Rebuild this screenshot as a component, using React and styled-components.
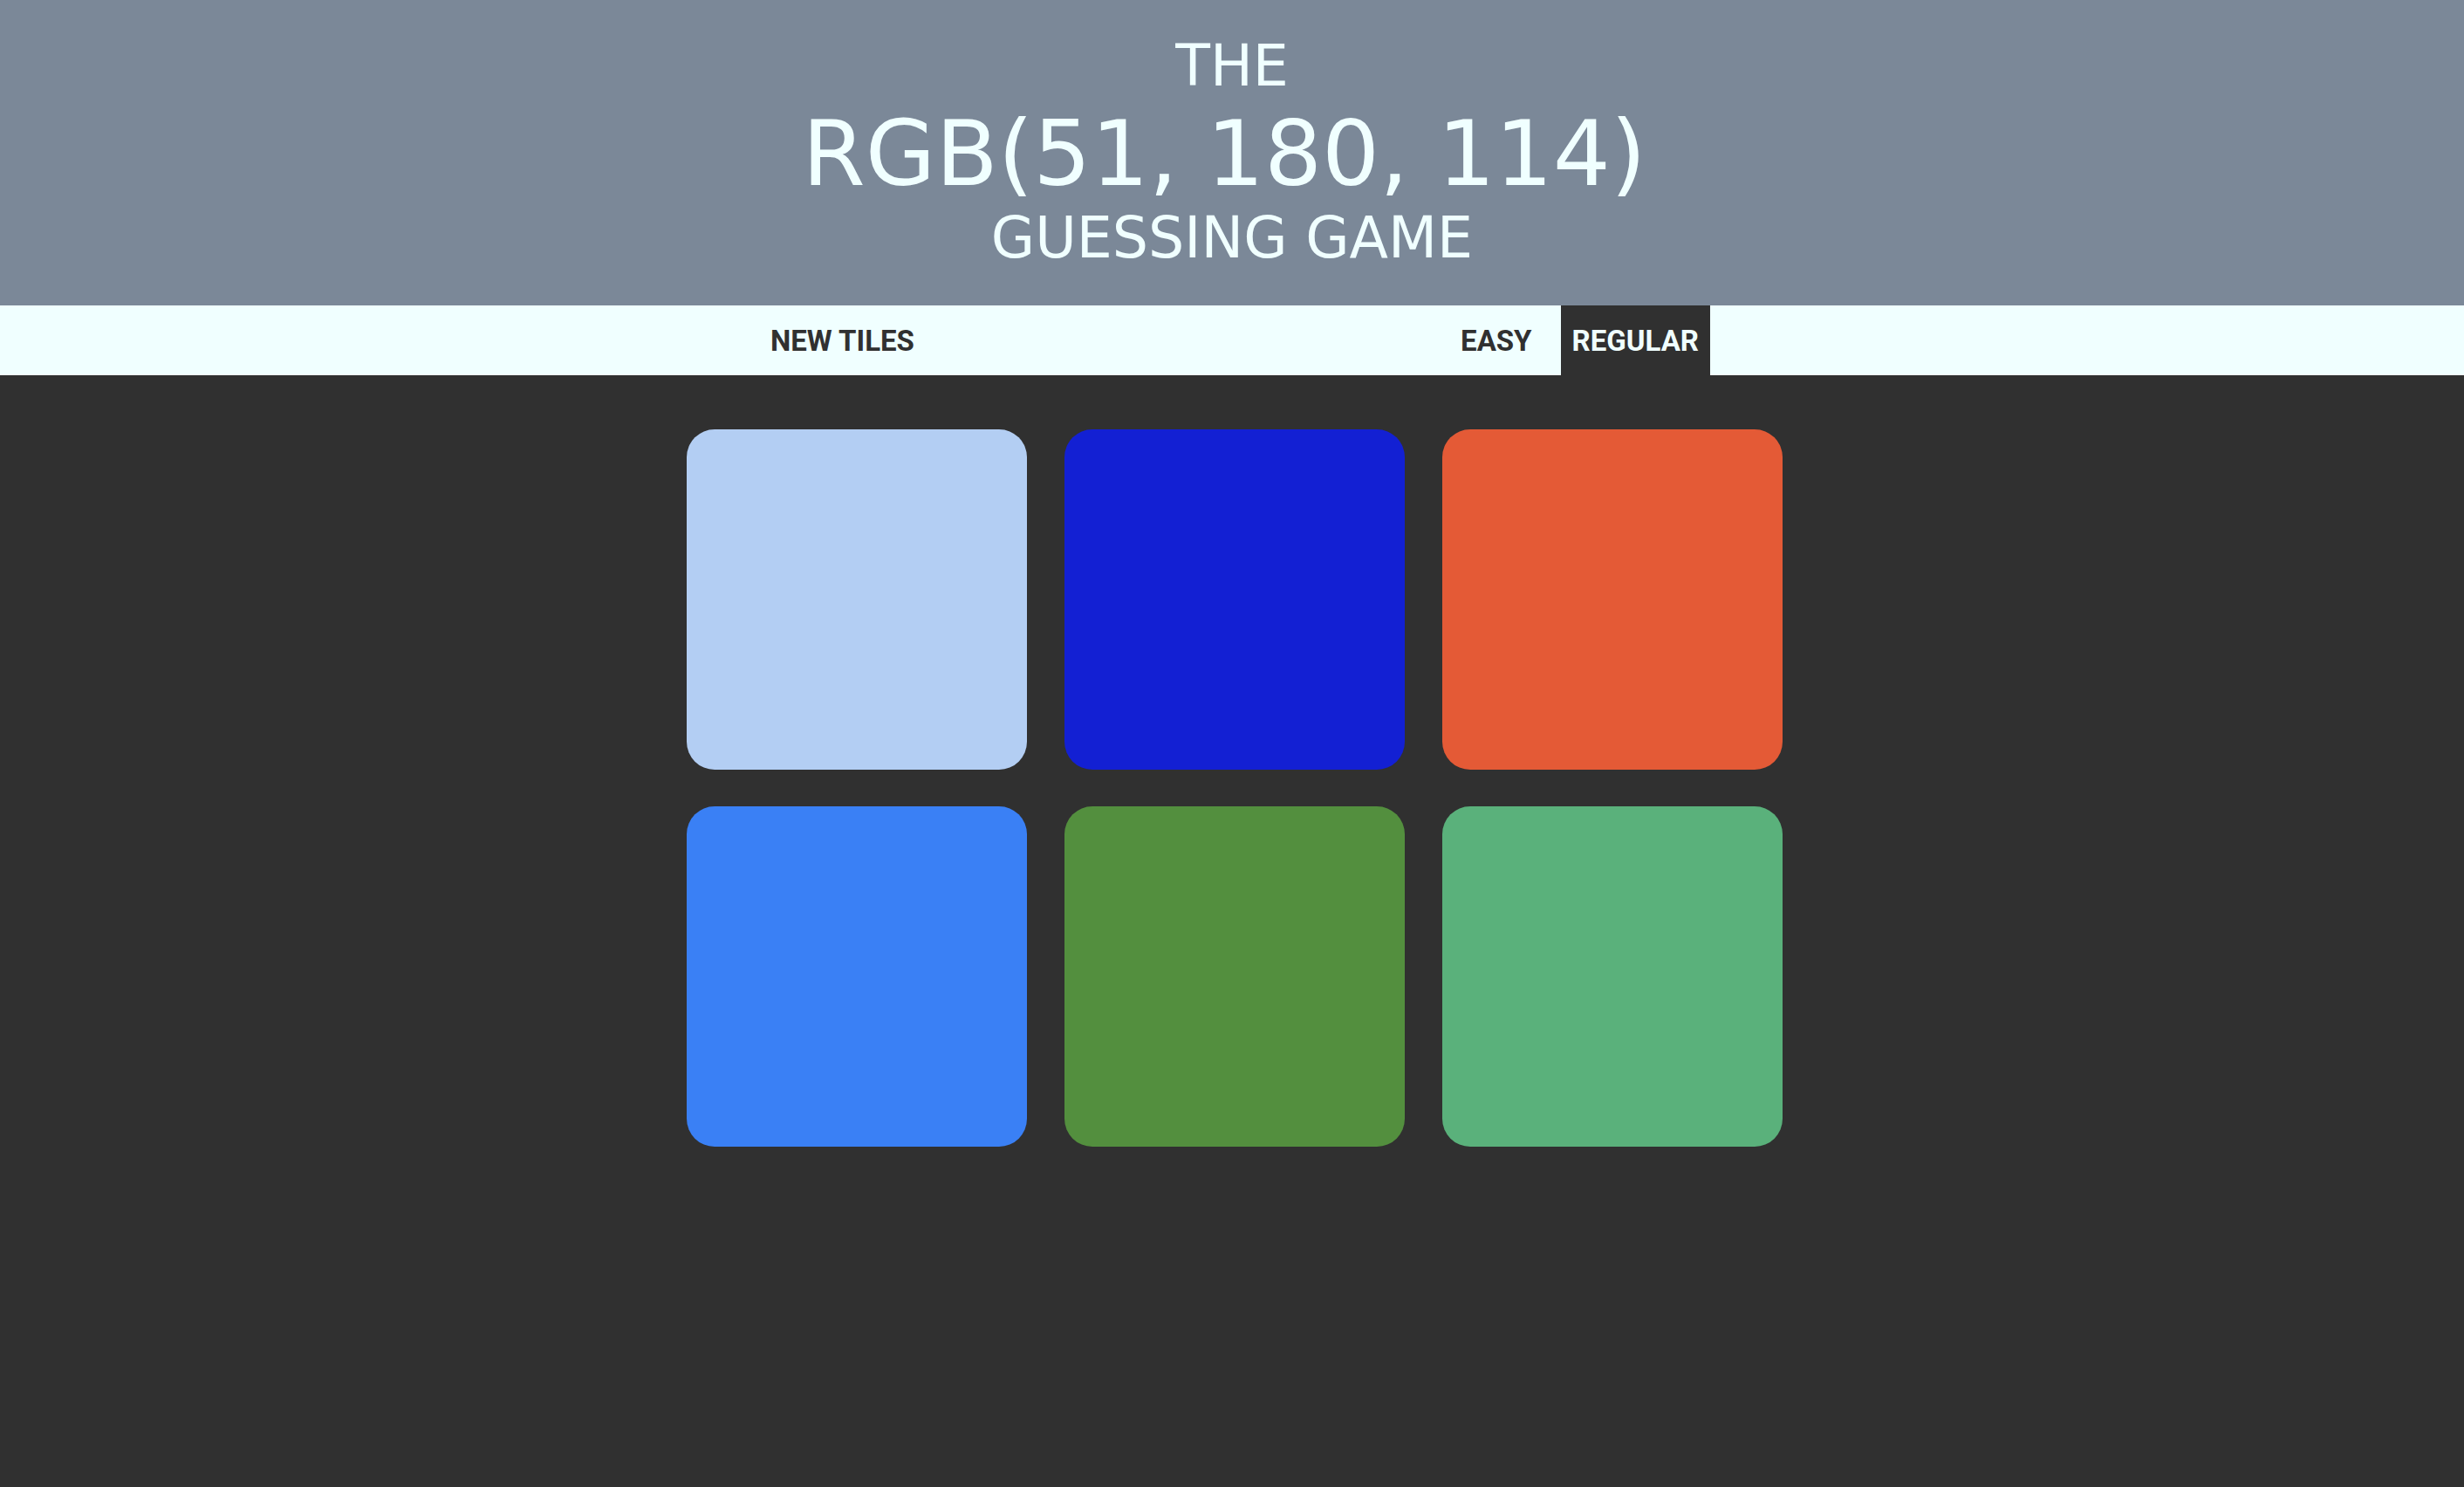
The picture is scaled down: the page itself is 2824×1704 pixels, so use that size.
import React from "react";
import styled, { createGlobalStyle } from "styled-components";

const tiles = ["#b3cef3", "#1320d3", "#e45a36", "#3a80f5", "#538f3e", "#5ab17b"];

const GlobalStyle = createGlobalStyle`
  html, body {
    margin: 0;
    padding: 0;
    background: #303030;
    min-height: 100%;
  }
  body {
    font-family: "DejaVu Sans", Verdana, sans-serif;
  }
`;

const App = () => {
  return (
    <>
      <GlobalStyle />
      <Header>
        <SmallLine>THE</SmallLine>
        <BigLine>RGB(51, 180, 114)</BigLine>
        <SmallLine $gap="13px">GUESSING GAME</SmallLine>
      </Header>
      <NavBar>
        <NavInner>
          <NavButton>NEW TILES</NavButton>
          <ModeGroup>
            <NavButton>EASY</NavButton>
            <NavButton $active>REGULAR</NavButton>
          </ModeGroup>
        </NavInner>
      </NavBar>
      <Board>
        {tiles.map((c) => (
          <Tile key={c} $color={c} />
        ))}
      </Board>
    </>
  );
};

const Header = styled.header`
  height: 350px;
  box-sizing: border-box;
  padding-top: 44px;
  background: #7b8898;
  color: #f0ffff;
  text-align: center;
  font-weight: 400;
`;

const SmallLine = styled.div`
  font-size: 65px;
  line-height: 64px;
  margin-top: ${(p) => p.$gap || "0"};
`;

const BigLine = styled.div`
  font-size: 104px;
  line-height: 104px;
  margin-top: 16px;
  padding-right: 18px;
`;

const NavBar = styled.nav`
  height: 80px;
  background: #f0ffff;
  padding-left: 6px;
`;

const NavInner = styled.div`
  width: 1090px;
  height: 100%;
  margin: 0 auto;
  display: flex;
  justify-content: space-between;
`;

const ModeGroup = styled.div`
  display: flex;
  gap: 20px;
`;

const NavButton = styled.button`
  height: 100%;
  border: none;
  margin: 0;
  padding: 0 13px;
  background: ${(p) => (p.$active ? "#303030" : "transparent")};
  color: ${(p) => (p.$active ? "#f0ffff" : "#303030")};
  font-family: "Roboto", "Inter", sans-serif;
  font-weight: 700;
  font-size: 33px;
  cursor: pointer;
`;

const Board = styled.main`
  width: 1256px;
  margin: 62px auto 0;
  padding-left: 6px;
  display: grid;
  grid-template-columns: repeat(3, 390px);
  gap: 42px 43px;
`;

const Tile = styled.div`
  width: 390px;
  height: 390px;
  border-radius: 32px;
  background: ${(p) => p.$color};
`;

export default App;
